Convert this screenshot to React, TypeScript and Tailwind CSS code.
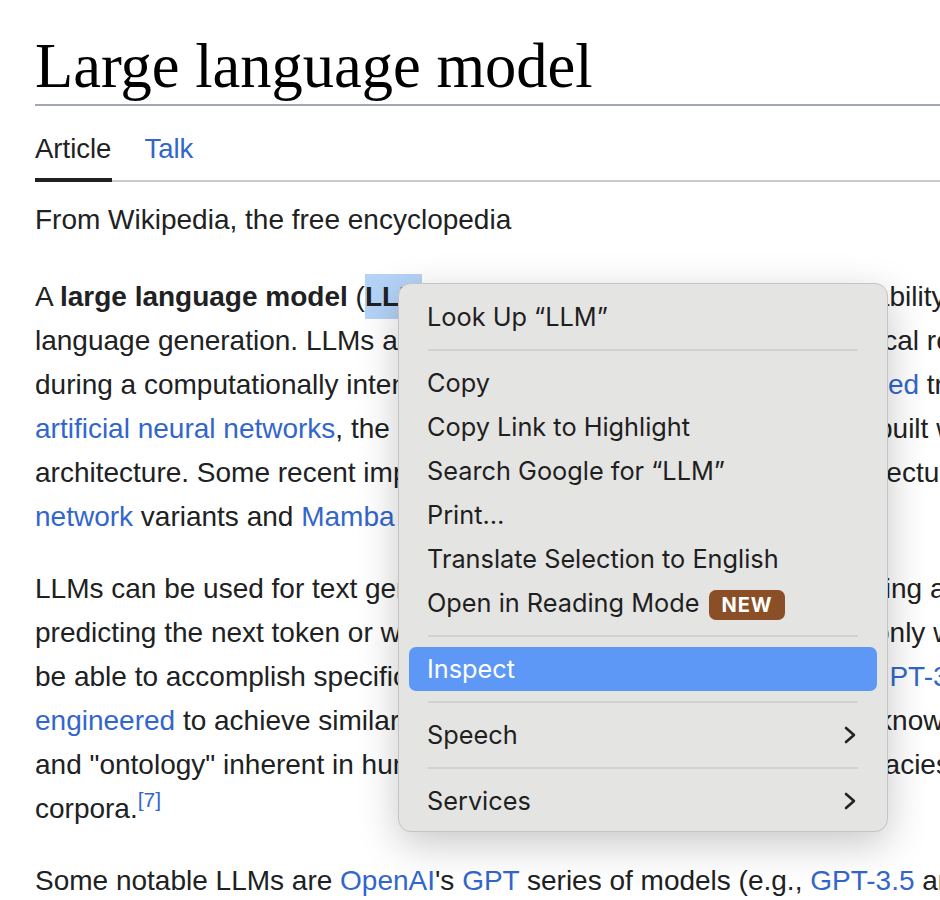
import React from 'react';

const A = ({ children }: { children: React.ReactNode }) => (
  <span className="text-[#3366cc]">{children}</span>
);

const Ref = ({ n }: { n: string }) => (
  <sup className="text-[#3366cc] text-[21px] relative -top-[11px]">[{n}]</sup>
);

function Chevron() {
  return (
    <svg width="16" height="20" viewBox="0 0 16 20" className="shrink-0">
      <polyline points="4,3 12,10 4,17" fill="none" stroke="#222" strokeWidth="2.6" strokeLinecap="round" strokeLinejoin="round" />
    </svg>
  );
}

function Separator() {
  return (
    <div className="h-[22px] flex items-center px-[29px]">
      <div className="h-[2px] w-full bg-[#d1d1d0]" />
    </div>
  );
}

function Item({ label, active, submenu, badge }: { label: string; active?: boolean; submenu?: boolean; badge?: boolean }) {
  return (
    <div
      className={
        active
          ? 'h-[44px] mx-[10px] pl-[18px] pr-[19px] flex items-center rounded-[7px] bg-[#5d98f6] text-white'
          : 'h-[44px] pl-[28px] pr-[29px] flex items-center text-[#1f1f1f]'
      }
    >
      <span className="whitespace-nowrap">{label}</span>
      {badge && (
        <span className="ml-[10px] h-[30px] px-[12px] flex items-center rounded-[7px] bg-[#8a4f26] text-white text-[20px] font-bold tracking-[1px] mt-[4px]">
          NEW
        </span>
      )}
      {submenu && (
        <div className="ml-auto">
          <Chevron />
        </div>
      )}
    </div>
  );
}

function ContextMenu() {
  return (
    <div className="absolute left-[398px] top-[283px] w-[490px] rounded-[13px] bg-[#e4e4e3] border border-[#c4c4c4] shadow-[0_12px_40px_rgba(0,0,0,0.22)] pt-[11px] pb-[8px] text-[25.3px] font-['Inter',sans-serif]">
      <Item label="Look Up “LLM”" />
      <Separator />
      <Item label="Copy" />
      <Item label="Copy Link to Highlight" />
      <Item label="Search Google for “LLM”" />
      <Item label="Print…" />
      <Item label="Translate Selection to English" />
      <Item label="Open in Reading Mode" badge />
      <Separator />
      <Item label="Inspect" active />
      <Separator />
      <Item label="Speech" submenu />
      <Separator />
      <Item label="Services" submenu />
    </div>
  );
}

export default function App() {
  return (
    <div className="relative w-[940px] h-[900px] overflow-hidden bg-white text-[#202122] font-['Liberation_Sans',Arial,sans-serif]">
      <div className="w-[1300px] pl-[35px]">
        {/* Title */}
        <h1 className="pt-[33px] pb-[5px] text-[62.5px] leading-[66px] font-['Liberation_Serif',serif] text-black border-b-2 border-[#a2a9b1]">
          Large language model
        </h1>

        {/* Tabs */}
        <div className="mt-[23px] flex text-[27.5px] leading-[40px] border-b-2 border-[#c8ccd1]">
          <div className="pb-[9px] -mb-[2px] border-b-4 border-[#202122] pr-[1px]">Article</div>
          <div className="ml-[32px] text-[#3366cc]">Talk</div>
        </div>

        {/* Tagline */}
        <div className="mt-[18px] text-[28px] leading-[40px]">From Wikipedia, the free encyclopedia</div>

        {/* Body */}
        <div className="text-[28px] leading-[44px] whitespace-nowrap">
          <p className="mt-[34px]">
            A <b>large language model</b> (<b className="inline-block bg-[#b4d3f7] leading-[45px]">LLM</b>) is a{' '}
            <A>language model</A> notable for its ability to achieve general-purpose
            <br />
            language generation. LLMs acquire these abilities by learning statistical relationships from text documents
            <br />
            during a computationally intensive <A>self-supervised</A> and <A>semi-supervised</A> training process.
            <Ref n="1" /> LLMs are
            <br />
            <A>artificial neural networks</A>, the largest and most capable of which are built with a transformer-based
            <br />
            architecture. Some recent implementations are based on other architectures, such as <A>recurrent neural</A>
            <br />
            <A>network</A> variants and <A>Mamba</A> (a <A>state space model</A>).<Ref n="2" />
            <Ref n="3" />
            <Ref n="4" />
          </p>

          <p className="mt-[28px]">
            LLMs can be used for text generation, a form of <A>generative AI</A>, by taking an input text and repeatedly
            <br />
            predicting the next token or word.<Ref n="5" /> Up to 2020, fine tuning was the only way a model could be adapted to
            <br />
            be able to accomplish specific tasks. Larger sized models, such as <A>GPT-3</A>, however, can be{' '}
            <A>prompt-</A>
            <br />
            <A>engineered</A> to achieve similar results.<Ref n="6" /> They are thought to acquire knowledge about syntax, semantics
            <br />
            and "ontology" inherent in human language corpora, but also inaccuracies and biases present in the
            <br />
            corpora.<Ref n="7" />
          </p>

          <p className="mt-[28px]">
            Some notable LLMs are <A>OpenAI</A>'s <A>GPT</A> series of models (e.g., <A>GPT-3.5</A> and <A>GPT-4</A>,
            used in <A>ChatGPT</A> and <A>Microsoft Copilot</A>)
          </p>
        </div>
      </div>

      <ContextMenu />
    </div>
  );
}
